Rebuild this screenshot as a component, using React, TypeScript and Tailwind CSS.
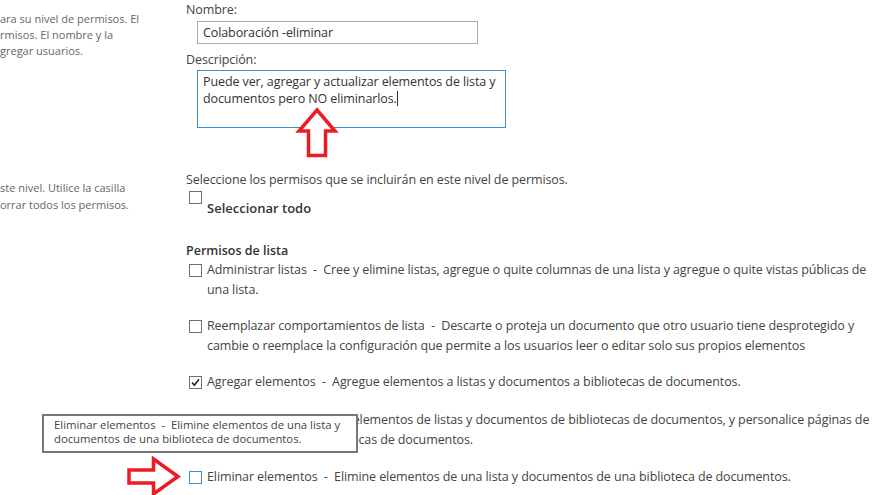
import React from "react";

type Perm = {
  lines: string[];
  state?: "checked" | "hover";
  top: string;
};

const perms: Perm[] = [
  {
    lines: [
      "Administrar listas  -  Cree y elimine listas, agregue o quite columnas de una lista y agregue o quite vistas públicas de",
      "una lista.",
    ],
    top: "mt-0",
  },
  {
    lines: [
      "Reemplazar comportamientos de lista  -  Descarte o proteja un documento que otro usuario tiene desprotegido y",
      "cambie o reemplace la configuración que permite a los usuarios leer o editar solo sus propios elementos",
    ],
    top: "mt-[16px]",
  },
  {
    lines: ["Agregar elementos  -  Agregue elementos a listas y documentos a bibliotecas de documentos."],
    state: "checked",
    top: "mt-[16px]",
  },
  {
    lines: [
      "Editar elementos  -  Edite elementos de listas y documentos de bibliotecas de documentos, y personalice páginas de",
      "elementos web en bibliotecas de documentos.",
    ],
    top: "mt-[18px]",
  },
  {
    lines: ["Eliminar elementos  -  Elimine elementos de una lista y documentos de una biblioteca de documentos."],
    state: "hover",
    top: "mt-[17px]",
  },
];

function Checkbox({ state }: { state?: "checked" | "hover" }) {
  const border = state === "hover" ? "border-[#3a8fd3]" : "border-[#707070]";
  return (
    <span className={`relative block w-[13px] h-[13px] shrink-0 border bg-white ${border}`}>
      {state === "checked" && (
        <svg viewBox="0 0 11 11" className="absolute inset-0 w-[11px] h-[11px]">
          <path d="M2 5.5 L4.3 8.2 L9 2.2" fill="none" stroke="#222" strokeWidth="1.6" />
        </svg>
      )}
    </span>
  );
}

export default function App() {
  return (
    <div className="relative w-[889px] h-[495px] overflow-hidden bg-white font-['Open_Sans',sans-serif] text-[#444]">
      <div className="flex">
        {/* left help column, scrolled off to the left */}
        <div className="w-[186px] shrink-0 overflow-hidden text-[11px] leading-[16px] text-[#666] whitespace-nowrap">
          <div className="mt-[11px]">
            <div>ara su nivel de permisos. El</div>
            <div>rmisos. El nombre y la</div>
            <div>gregar usuarios.</div>
          </div>
          <div className="mt-[120px] leading-[17px]">
            <div>ste nivel. Utilice la casilla</div>
            <div>orrar todos los permisos.</div>
          </div>
        </div>

        {/* form column */}
        <div className="flex-1 text-[12.5px] tracking-[-0.1px]">
          <div className="leading-[20px]">Nombre:</div>
          <div className="mt-[1px] ml-[11px] w-[281px] h-[23px] border border-[#ababab] px-[5px] leading-[21px] text-[#333]">
            Colaboración -eliminar
          </div>
          <div className="mt-[6px] leading-[20px]">Descripción:</div>
          <div className="ml-[11px] w-[309px] h-[58px] border border-[#3a8fd3] px-[5px] pt-[2px] leading-[17px] text-[#333] whitespace-nowrap">
            <div>Puede ver, agregar y actualizar elementos de lista y</div>
            <div>
              documentos pero NO eliminarlos.
              <span className="inline-block w-px h-[15px] align-[-3px] bg-[#333]" />
            </div>
          </div>

          <div className="mt-[42px] leading-[20px]">
            Seleccione los permisos que se incluirán en este nivel de permisos.
          </div>
          <div className="flex items-start ml-[3px]">
            <span className="mt-[1px]">
              <Checkbox />
            </span>
            <span className="ml-[5px] mt-[8px] text-[13px] tracking-normal font-semibold leading-[20px] text-[#333]">
              Seleccionar todo
            </span>
          </div>

          <div className="mt-[24px] text-[12.5px] tracking-normal font-semibold leading-[18px] text-[#333]">
            Permisos de lista
          </div>
          <div className="flex flex-col whitespace-pre">
            {perms.map((p, i) => (
              <div key={i} className={`flex items-start ml-[3px] ${p.top}`}>
                <span className="mt-[4px]">
                  <Checkbox state={p.state} />
                </span>
                <div className="ml-[5px] leading-[20px]">
                  {p.lines.map((l, j) => (
                    <div key={j}>{l}</div>
                  ))}
                </div>
              </div>
            ))}
          </div>
        </div>
      </div>

      {/* tooltip over the hovered permission */}
      <div className="absolute left-[42px] top-[414px] w-[316px] h-[39px] border-2 border-[#777] bg-white px-[10px] pt-[2px] text-[11.3px] leading-[14px] text-[#444] whitespace-pre">
        <div>Eliminar elementos  -  Elimine elementos de una lista y</div>
        <div>documentos de una biblioteca de documentos.</div>
      </div>

      {/* red annotation arrows */}
      <svg className="absolute inset-0 w-[889px] h-[495px] pointer-events-none" viewBox="0 0 889 495">
        <polygon
          points="317,110 335,131 325.5,131 325.5,155.5 308.5,155.5 308.5,131 299,131"
          fill="white"
          stroke="#ed1c24"
          strokeWidth="3.5"
        />
        <polygon
          points="129,470 153.5,470 153.5,459 178,476.5 153.5,494 153.5,483 129,483"
          fill="white"
          stroke="#ed1c24"
          strokeWidth="3.5"
        />
      </svg>
    </div>
  );
}
